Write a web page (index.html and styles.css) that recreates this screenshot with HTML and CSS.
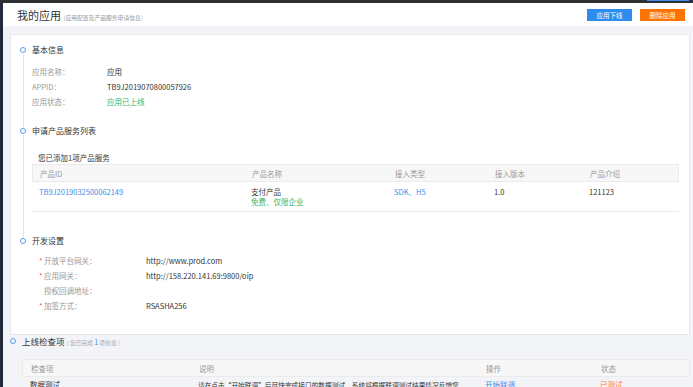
FILE: index.html
```html
<!DOCTYPE html>
<html lang="zh-CN">
<head>
    <meta charset="UTF-8">
    <meta name="viewport" content="width=device-width, initial-scale=1.0">
    <title>我的应用</title>
    <link rel="stylesheet" href="styles.css">
</head>
<body>

<div class="topbar"><span class="tab-mark"></span></div>

<div class="frame">
    <!-- 页头 -->
    <header class="page-head">
        <h1>我的应用 <small>(应用配置及产品服务申请信息)</small></h1>
        <div class="actions">
            <button class="btn btn-blue">应用下线</button>
            <button class="btn btn-orange">删除应用</button>
        </div>
    </header>

    <div class="main">
        <div class="card">
            <!-- 基本信息 -->
            <div class="section">
                <h2>基本信息</h2>
                <div class="info-row"><span class="label">应用名称：</span><span>应用</span></div>
                <div class="info-row"><span class="label">APPID：</span><span>TB9J2019070800057926</span></div>
                <div class="info-row"><span class="label">应用状态：</span><span class="green">应用已上线</span></div>
            </div>

            <!-- 申请产品服务列表 -->
            <div class="section">
                <h2>申请产品服务列表</h2>
                <p class="note">您已添加1项产品服务</p>
                <div class="table prod-table">
                    <div class="thead">
                        <span>产品ID</span>
                        <span>产品名称</span>
                        <span>接入类型</span>
                        <span>接入版本</span>
                        <span>产品介绍</span>
                    </div>
                    <div class="trow">
                        <span class="blue">TB9J2019032500062149</span>
                        <span>支付产品<br><em class="green">免费、仅限企业</em></span>
                        <span class="blue">SDK、H5</span>
                        <span>1.0</span>
                        <span>121123</span>
                    </div>
                </div>
            </div>

            <!-- 开发设置 -->
            <div class="section last">
                <h2>开发设置</h2>
                <div class="dev-row"><span class="label"><i>*</i>开放平台网关：</span><span>http://www.prod.com</span></div>
                <div class="dev-row"><span class="label"><i>*</i>应用网关：</span><span>http://158.220.141.69:9800/oip</span></div>
                <div class="dev-row"><span class="label"><i></i>授权回调地址：</span><span></span></div>
                <div class="dev-row"><span class="label"><i>*</i>加签方式：</span><span>RSASHA256</span></div>
            </div>
        </div>

        <!-- 上线检查项 -->
        <div class="check">
            <h2>上线检查项 <small>( 您已完成 <b>1</b> 项检查 )</small></h2>
            <div class="table check-table">
                <div class="thead">
                    <span>检查项</span>
                    <span>说明</span>
                    <span>操作</span>
                    <span>状态</span>
                </div>
                <div class="trow">
                    <span>数据测试</span>
                    <span class="desc">请在点击“开始联调”后尽快完成接口的数据测试，系统将根据联调测试结果情况反馈您</span>
                    <span class="blue">开始联调</span>
                    <span class="orange">已测试</span>
                </div>
            </div>
        </div>
    </div>
</div>

</body>
</html>
```

FILE: styles.css
```css
body {
    font-family: "Noto Sans CJK SC", "Liberation Sans", sans-serif;
    margin: 0;
    padding: 0;
    background-color: #f3f4f7;
    color: #333;
    font-size: 7.5px;
    height: 387px;
    overflow: hidden;
}
.topbar {
    height: 3px;
    background-color: #2f3033;
    position: relative;
}
.tab-mark {
    position: absolute;
    left: 647px;
    top: 0;
    width: 42px;
    height: 1px;
    background-color: #3d8ee8;
}
.frame {
    border-left: 3px solid #232a3c;
    height: 384px;
}
.page-head {
    height: 23px;
    background-color: #fff;
    display: flex;
    align-items: center;
    justify-content: space-between;
    padding: 0 8px 0 14px;
}
.page-head h1 {
    margin: 0;
    font-size: 11px;
    font-weight: normal;
    color: #333;
}
.page-head h1 small {
    font-size: 5.8px;
    color: #999;
}
.actions {
    display: flex;
    gap: 8px;
}
.btn {
    width: 45px;
    height: 12px;
    border: none;
    padding: 0;
    color: #fff;
    font-family: inherit;
    font-size: 6.5px;
    cursor: pointer;
}
.btn-blue {
    background-color: #2d8cf0;
}
.btn-orange {
    background-color: #ff7300;
}
.main {
    padding: 8px 3px 0 7px;
}
.card {
    background-color: #fff;
    border: 1px solid #e6e8ec;
    padding: 8px 0 21px 12px;
}
.section {
    position: relative;
    padding-left: 9px;
    padding-bottom: 15px;
}
.section::before {
    content: "";
    position: absolute;
    left: -3px;
    top: 4px;
    width: 4px;
    height: 4px;
    border: 1.3px solid #5b9ef0;
    border-radius: 50%;
    background-color: #fff;
}
.section::after {
    content: "";
    position: absolute;
    left: 0;
    top: 11px;
    bottom: -5px;
    width: 1px;
    background-color: #e2e5ea;
}
.section.last {
    padding-bottom: 0;
}
.section.last::after {
    display: none;
}
h2 {
    margin: 0;
    font-size: 8px;
    font-weight: normal;
    line-height: 14px;
    color: #333;
}
.info-row {
    line-height: 15px;
    display: flex;
}
.section h2 + .info-row {
    margin-top: 7px;
}
.label {
    color: #999;
    width: 75px;
    flex: none;
}
.green {
    color: #34b46a;
    font-style: normal;
}
.blue {
    color: #3a8ee8;
}
.orange {
    color: #ff7a1a;
}
.note {
    margin: 14px 0 0 6px;
    line-height: 12px;
    color: #333;
}
.table {
    margin-right: 10px;
}
.thead {
    display: grid;
    height: 18px;
    box-sizing: border-box;
    align-items: center;
    background-color: #f7f7f7;
    border: 1px solid #ebebeb;
    color: #999;
}
.trow {
    display: grid;
    border-bottom: 1px solid #ebebeb;
    padding: 5px 0 4px;
    line-height: 10px;
    min-height: 30px;
    box-sizing: border-box;
}
.prod-table .thead,
.prod-table .trow {
    grid-template-columns: 212px 143px 100px 95px 1fr;
    padding-left: 7px;
}
.section:nth-child(2) {
    padding-bottom: 22px;
}
.dev-row {
    line-height: 15px;
    display: flex;
}
.section h2 + .dev-row {
    margin-top: 5px;
}
.dev-row .label {
    width: 107px;
    padding-left: 7px;
}
.dev-row .label i {
    display: inline-block;
    width: 5px;
    color: #f05050;
    font-style: normal;
}
.check {
    position: relative;
    padding-left: 12px;
}
.check::before {
    content: "";
    position: absolute;
    left: 0;
    top: 3px;
    width: 4px;
    height: 4px;
    border: 1.3px solid #5b9ef0;
    border-radius: 50%;
}
.check h2 {
    font-size: 8.5px;
    line-height: 12px;
}
.check h2 small {
    font-size: 5.8px;
    color: #aaa;
}
.check h2 small b {
    font-size: 7px;
    font-weight: normal;
    color: #3a8ee8;
}
.check-table {
    margin: 10px 0 0 0;
}
.check-table .thead,
.check-table .trow {
    grid-template-columns: 168px 287px 115px 1fr;
    padding-left: 8px;
}
.check-table .trow {
    border-bottom: none;
    padding-top: 3px;
}
.desc {
    font-size: 6.7px;
    white-space: nowrap;
    overflow: hidden;
    padding-right: 8px;
}
```
